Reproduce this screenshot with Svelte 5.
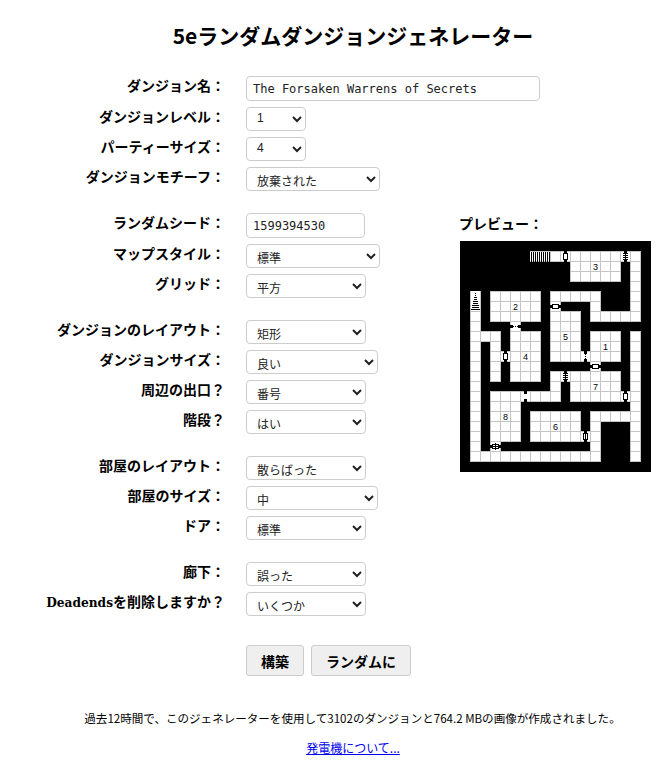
<script>
	const groups = [
		[
			{ label: 'ダンジョン名：', input: 'The Forsaken Warrens of Secrets', w: 294 },
			{ label: 'ダンジョンレベル：', value: '1', w: 60 },
			{ label: 'パーティーサイズ：', value: '4', w: 60 },
			{ label: 'ダンジョンモチーフ：', value: '放棄された', w: 134 }
		],
		[
			{ label: 'ランダムシード：', input: '1599394530', w: 119 },
			{ label: 'マップスタイル：', value: '標準', w: 134 },
			{ label: 'グリッド：', value: '平方', w: 120 }
		],
		[
			{ label: 'ダンジョンのレイアウト：', value: '矩形', w: 120 },
			{ label: 'ダンジョンサイズ：', value: '良い', w: 132 },
			{ label: '周辺の出口？', value: '番号', w: 120 },
			{ label: '階段？', value: 'はい', w: 120 }
		],
		[
			{ label: '部屋のレイアウト：', value: '散らばった', w: 120 },
			{ label: '部屋のサイズ：', value: '中', w: 132 },
			{ label: 'ドア：', value: '標準', w: 120 }
		],
		[
			{ label: '廊下：', value: '誤った', w: 120 },
			{ latin: 'Deadends', label: 'を削除しますか？', value: 'いくつか', w: 120 }
		]
	]

	// floor spans per row: [from col, to col]
	const floorRows = {
		1: [[7, 17]],
		2: [[11, 15], [17, 17]],
		3: [[11, 15], [17, 17]],
		4: [[17, 17]],
		5: [[1, 1], [3, 7], [9, 13], [17, 17]],
		6: [[1, 1], [3, 7], [9, 9], [13, 13], [17, 17]],
		7: [[1, 1], [3, 7], [9, 11], [13, 17]],
		8: [[1, 1], [5, 5], [9, 11]],
		9: [[1, 3], [5, 7], [9, 11], [13, 15], [17, 17]],
		10: [[1, 1], [3, 3], [5, 7], [9, 11], [13, 15], [17, 17]],
		11: [[1, 1], [3, 7], [9, 15], [17, 17]],
		12: [[1, 1], [3, 3], [5, 7], [13, 13], [17, 17]],
		13: [[1, 1], [3, 3], [5, 7], [9, 15], [17, 17]],
		14: [[1, 1], [9, 9], [11, 15], [17, 17]],
		15: [[1, 1], [3, 9], [11, 17]],
		16: [[1, 1], [3, 5], [17, 17]],
		17: [[1, 1], [3, 5], [7, 11], [13, 17]],
		18: [[1, 1], [3, 5], [7, 11], [13, 13], [17, 17]],
		19: [[1, 1], [3, 5], [7, 13], [17, 17]],
		20: [[1, 1], [3, 3], [13, 13], [17, 17]],
		21: [[1, 13], [17, 17]]
	}
	const cells = []
	for (const r in floorRows) {
		for (const [a, b] of floorRows[r]) {
			for (let c = a; c <= b; c++) cells.push({ c, r: +r })
		}
	}

	// t: door type, v: door plane runs top to bottom
	const doors = [
		{ c: 10, r: 1, v: true, t: 'door' },
		{ c: 16, r: 1, v: true, t: 'bars' },
		{ c: 9, r: 6, v: false, t: 'door' },
		{ c: 5, r: 8, v: false, t: 'dots' },
		{ c: 4, r: 11, v: true, t: 'door' },
		{ c: 12, r: 11, v: true, t: 'dots' },
		{ c: 13, r: 12, v: false, t: 'door' },
		{ c: 10, r: 13, v: true, t: 'bars' },
		{ c: 16, r: 15, v: true, t: 'door' },
		{ c: 6, r: 15, v: true, t: 'arch' },
		{ c: 12, r: 19, v: true, t: 'double' },
		{ c: 3, r: 20, v: false, t: 'cross' }
	]

	const numbers = [
		{ n: 3, c: 13, r: 2 },
		{ n: 2, c: 5, r: 6 },
		{ n: 5, c: 10, r: 9 },
		{ n: 1, c: 14, r: 10 },
		{ n: 4, c: 6, r: 11 },
		{ n: 7, c: 13, r: 14 },
		{ n: 8, c: 4, r: 17 },
		{ n: 6, c: 9, r: 18 }
	]

	const hStairs = Array.from({ length: 9 }, (_, i) => i)
	const vStairs = Array.from({ length: 10 }, (_, i) => i)
	const ticks = [2, 4, 6, 8]
	const dots = [2, 4, 6, 8]
</script>

<div class="page">
	<h1>5eランダムダンジョンジェネレーター</h1>

	<div class="main">
		<form>
			{#each groups as group}
				<div class="group">
					{#each group as row}
						<div class="row">
							<span class="label">{#if row.latin}<span class="latin">{row.latin}</span>{/if}{row.label}</span>
							{#if row.input}
								<input type="text" value={row.input} style="width: {row.w}px" />
							{:else}
								<select class:digit={/^\d/.test(row.value)} style="width: {row.w}px">
									<option>{row.value}</option>
								</select>
							{/if}
						</div>
					{/each}
				</div>
			{/each}
			<div class="buttons">
				<button type="button" class="build">構築</button>
				<button type="button" class="random">ランダムに</button>
			</div>
		</form>

		<aside>
			<div class="preview-label">プレビュー：</div>
			<svg class="map" width="191" height="231" viewBox="0 0 191 231" shape-rendering="crispEdges">
				<rect width="191" height="231" fill="#000" />
				{#each cells as cell}
					<rect x={cell.c * 10} y={cell.r * 10} width="10" height="10" fill="#fff" />
				{/each}
				{#each cells as cell}
					<rect x={cell.c * 10 + 0.5} y={cell.r * 10 + 0.5} width="10" height="10" fill="none" stroke="#c4c4c4" />
				{/each}

				<!-- stairs, top corridor -->
				<rect x="70" y="11" width="20" height="9" fill="#fff" />
				{#each vStairs as i}
					<rect x={71 + i * 2} y="11" width="1" height="10" fill="#000" />
				{/each}
				<!-- stairs, left corridor -->
				<rect x="11" y="50" width="9" height="20" fill="#fff" />
				{#each hStairs as i}
					<rect x={15 - Math.floor(i / 2)} y={52 + i * 2} width={1 + Math.floor(i / 2) * 2} height="1" fill="#000" />
				{/each}

				{#each doors as d}
					<g transform="translate({d.c * 10} {d.r * 10})">
						<rect x="1" y="1" width="9" height="9" fill="#fff" />
						{#if d.v}
							<rect x="4" y="0" width="3" height="3" fill="#000" />
							<rect x="4" y="8" width="3" height="3" fill="#000" />
						{:else}
							<rect x="0" y="4" width="3" height="3" fill="#000" />
							<rect x="8" y="4" width="3" height="3" fill="#000" />
						{/if}
						{#if d.t === 'door' || d.t === 'double' || d.t === 'cross'}
							{#if d.v}
								<rect x="3.5" y="2.5" width="4" height="6" fill="#fff" stroke="#000" />
							{:else}
								<rect x="2.5" y="3.5" width="6" height="4" fill="#fff" stroke="#000" />
							{/if}
							{#if d.t === 'double'}
								<rect x="5" y="2" width="1" height="7" fill="#000" />
							{/if}
							{#if d.t === 'cross'}
								<rect x="5" y="2" width="1" height="7" fill="#000" />
								<rect x="1" y="5" width="9" height="1" fill="#000" />
							{/if}
						{:else if d.t === 'dots'}
							{#each dots as i}
								{#if d.v}
									<rect x="5" y={i + 1} width="1" height="1" fill="#000" />
								{:else}
									<rect x={i + 1} y="5" width="1" height="1" fill="#000" />
								{/if}
							{/each}
						{:else if d.t === 'bars'}
							<rect x="5" y="0" width="1" height="11" fill="#000" />
							{#each ticks as i}
								<rect x="3" y={i} width="5" height="1" fill="#000" />
							{/each}
						{/if}
					</g>
				{/each}

				{#each numbers as num}
					<text x={num.c * 10 + 5.5} y={num.r * 10 + 9} class="num" text-anchor="middle">{num.n}</text>
				{/each}
			</svg>
		</aside>
	</div>

	<p class="stats">過去12時間で、このジェネレーターを使用して3102のダンジョンと764.2 MBの画像が作成されました。</p>
	<p class="about"><a href="#about">発電機について...</a></p>
</div>

<style>
	:global(body) {
		margin: 0;
		background: #fff;
		color: #000;
		font-family: "DejaVu Serif", "Noto Sans CJK JP", serif;
	}
	.page {
		width: 672px;
		height: 766px;
		overflow: hidden;
		box-sizing: border-box;
		padding-top: 22px;
	}
	h1 {
		margin: 0 0 0 34px;
		font: bold 21px/26px "Noto Sans CJK JP", sans-serif;
		text-align: center;
	}
	.main {
		display: flex;
		margin-top: 28px;
	}
	form {
		width: 459px;
		flex: none;
	}
	.group {
		display: flex;
		flex-direction: column;
		gap: 6px;
		margin-bottom: 22px;
	}
	.row {
		display: flex;
		align-items: flex-start;
		gap: 21px;
	}
	.label {
		width: 225px;
		flex: none;
		text-align: right;
		font-weight: bold;
		font-size: 14px;
		line-height: 18px;
		white-space: nowrap;
		font-family: "Noto Sans CJK JP", sans-serif;
	}
	.latin {
		font-family: "DejaVu Serif", serif;
		font-size: 12.2px;
	}
	input, select {
		flex: none;
		box-sizing: border-box;
		border: 1px solid #ccc;
		border-radius: 4px;
		background: #fff;
		color: #222;
		margin: 0;
	}
	input {
		height: 25px;
		padding: 0 6px;
		font: 12px "DejaVu Sans Mono", monospace;
	}
	select {
		height: 24px;
		padding: 2px 4px 0 6px;
		font: 12px "Noto Sans CJK JP", sans-serif;
	}
	select.digit {
		padding: 0 4px 2px 6px;
		font-family: "Liberation Sans", sans-serif;
	}
	.buttons {
		display: flex;
		gap: 7px;
		margin: 29px 0 0 246px;
	}
	button {
		height: 31px;
		box-sizing: border-box;
		padding: 0;
		border: 1px solid #ccc;
		border-radius: 3px;
		background: #efefef;
		color: #000;
		font: bold 14px "Noto Sans CJK JP", sans-serif;
	}
	.build {
		width: 58px;
	}
	.random {
		width: 100px;
	}
	aside {
		padding-top: 137px;
	}
	.preview-label {
		font: bold 14px/20px "Noto Sans CJK JP", sans-serif;
		height: 28px;
		white-space: nowrap;
	}
	.map {
		display: block;
		margin-left: 1px;
	}
	.num {
		font: 9px "Liberation Sans", sans-serif;
		fill: #000;
	}
	.stats {
		margin: 34px 0 0;
		padding-left: 33px;
		text-align: center;
		font: 11.55px/16px "Noto Sans CJK JP", sans-serif;
		white-space: nowrap;
	}
	.about {
		margin: 14px 0 0 34px;
		text-align: center;
		font: 12px/16px "Noto Sans CJK JP", sans-serif;
	}
	a {
		color: #00e;
	}
</style>
